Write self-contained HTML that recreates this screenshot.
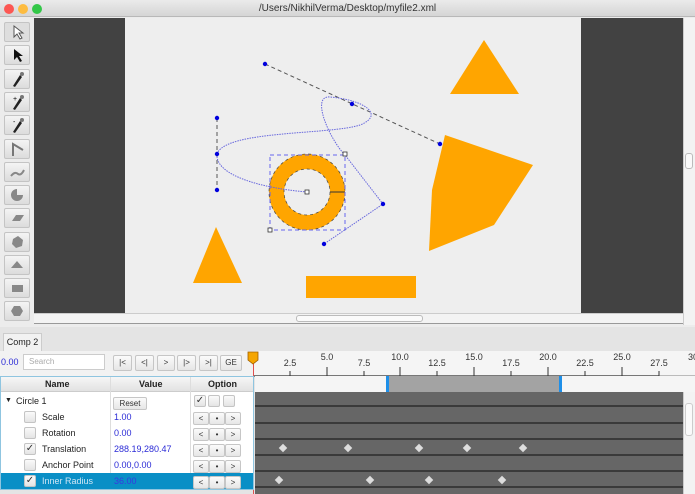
<!DOCTYPE html>
<html><head><meta charset="utf-8"><style>
*{margin:0;padding:0;box-sizing:border-box}
body{width:695px;height:494px;overflow:hidden;background:#ececec;font-family:"Liberation Sans",sans-serif;font-size:9px;color:#222;position:relative}
.abs{position:absolute}
.tb{left:0;top:0;width:695px;height:17px;background:linear-gradient(#ebebeb,#d5d5d5);border-bottom:1px solid #b8b8b8;text-align:center;font-size:10px;line-height:17px;color:#333}
.dot{width:10px;height:10px;border-radius:5px;top:4px}
.tool{left:4px;width:26px;height:20px;background:linear-gradient(#f4f4f4,#dcdcdc);border:1px solid #c4c4c4;border-radius:2px}
.btn{height:16px;background:linear-gradient(#fbfbfb,#e6e6e6);border:1px solid #c6c6c6;border-radius:2px;font-size:8px;text-align:center;line-height:14px;color:#333}
.row{left:0;width:253px;height:16px;font-size:9px;line-height:16px}
.cb{width:12px;height:12px;background:linear-gradient(#fafafa,#e4e4e4);border:1px solid #c4c4c4;border-radius:2px;font-size:10px;line-height:10px;text-align:center;color:#333}
.val{color:#2b2bd6}
.trk{left:255px;width:428px;height:15px;background:#666;border-bottom:2px solid #3a3a3a}
.dm{width:6px;height:6px;background:#ddd;transform:rotate(45deg)}
.tick{font-size:9px;color:#333}
</style></head><body>
<div class="abs tb">/Users/NikhilVerma/Desktop/myfile2.xml</div>
<div class="abs dot" style="left:4px;background:#fc5753"></div>
<div class="abs dot" style="left:18px;background:#fdbc40"></div>
<div class="abs dot" style="left:32px;background:#33c748"></div>

<!-- toolbar -->
<div class="abs" style="left:0;top:18px;width:34px;height:309px;background:#ececec"></div>
<div class="abs tool" style="top:22px;background:#dedede"><svg width="24" height="18"><path d="M9 3 L9 14 L12 11 L15 16 L17 15 L14 10 L18 10 Z" fill="#fff" stroke="#555" stroke-width="1"/></svg></div>
<div class="abs tool" style="top:45px"><svg width="24" height="18"><path d="M9 3 L9 14 L12 11 L15 16 L17 15 L14 10 L18 10 Z" fill="#111"/></svg></div>
<div class="abs tool" style="top:69px"><svg width="24" height="18"><path d="M8 16 L15 5 L17 7 L10 17 Z" fill="#222"/><circle cx="17" cy="4" r="2" fill="#777"/></svg></div>
<div class="abs tool" style="top:92px"><svg width="24" height="18"><path d="M8 16 L15 5 L17 7 L10 17 Z" fill="#222"/><circle cx="17" cy="4" r="2" fill="#777"/><text x="8" y="8" font-size="7">+</text></svg></div>
<div class="abs tool" style="top:115px"><svg width="24" height="18"><path d="M8 16 L15 5 L17 7 L10 17 Z" fill="#222"/><circle cx="17" cy="4" r="2" fill="#777"/><text x="8" y="8" font-size="7">-</text></svg></div>
<div class="abs tool" style="top:139px"><svg width="24" height="18"><path d="M8 16 L8 4 L18 10" fill="none" stroke="#777" stroke-width="2"/></svg></div>
<div class="abs tool" style="top:162px"><svg width="24" height="18"><path d="M6 13 Q10 8 13 11 Q16 13 19 7" fill="none" stroke="#888" stroke-width="2"/></svg></div>
<div class="abs tool" style="top:185px"><svg width="24" height="18"><path d="M12 9 L12 3 A6 6 0 1 0 18 9 Z" fill="#888"/></svg></div>
<div class="abs tool" style="top:208px"><svg width="24" height="18"><path d="M7 12 L11 6 L19 6 L15 12 Z" fill="#888"/></svg></div>
<div class="abs tool" style="top:232px"><svg width="24" height="18"><path d="M8 6 L13 3 L18 7 L17 13 L11 15 L7 11 Z" fill="#888"/></svg></div>
<div class="abs tool" style="top:255px"><svg width="24" height="18"><path d="M12 5 L18 12 L6 12 Z" fill="#888"/></svg></div>
<div class="abs tool" style="top:278px"><svg width="24" height="18"><rect x="7" y="6" width="11" height="7" fill="#888"/></svg></div>
<div class="abs tool" style="top:301px"><svg width="24" height="18"><path d="M9 4 L15 4 L18 9 L15 14 L9 14 L6 9 Z" fill="#888"/></svg></div>

<!-- canvas -->
<div class="abs" style="left:34px;top:18px;width:649px;height:295px;background:#424242"></div>
<div class="abs" style="left:125px;top:18px;width:456px;height:295px;background:#eeeeee"></div>
<div class="abs" style="left:683px;top:18px;width:12px;height:307px;background:#f3f3f3;border-left:1px solid #ccc"></div>
<div class="abs" style="left:685px;top:153px;width:8px;height:16px;background:#fafafa;border:1px solid #bbb;border-radius:3px"></div>
<div class="abs" style="left:34px;top:313px;width:649px;height:11px;background:#f3f3f3;border-top:1px solid #ccc;border-bottom:1px solid #999"></div>
<div class="abs" style="left:296px;top:315px;width:127px;height:7px;background:#fafafa;border:1px solid #bbb;border-radius:3px"></div>

<svg class="abs" style="left:0;top:0" width="695" height="330">
<polygon points="484,40 450,94 519,94" fill="#ffa500"/>
<polygon points="445,135 533,165 494,225 429,251 432,190" fill="#ffa500"/>
<polygon points="216,227 193,283 242,283" fill="#ffa500"/>
<rect x="306" y="276" width="110" height="22" fill="#ffa500"/>
<path d="M307 154 A38 38 0 1 1 306.9 154 Z M307 169 A23 23 0 1 0 307.1 169 Z" fill="#ffa500" fill-rule="evenodd"/>
<circle cx="307" cy="192" r="38" fill="none" stroke="#444" stroke-width=".7" stroke-dasharray="3,3"/>
<circle cx="307" cy="192" r="23" fill="none" stroke="#444" stroke-width=".7" stroke-dasharray="3,3"/>
<line x1="330" y1="192" x2="345" y2="192" stroke="#333" stroke-width="1"/>
<rect x="270" y="155" width="75" height="75" fill="none" stroke="#66e" stroke-width="1" stroke-dasharray="4,3"/>
<line x1="265" y1="64" x2="440" y2="144" stroke="#555" stroke-dasharray="4,3"/>
<line x1="217" y1="118" x2="217" y2="190" stroke="#555" stroke-dasharray="4,3"/>
<path d="M217 154 C225 130 330 135 360 125 C385 115 365 100 330 97 C310 95 330 140 345 155 L383 204 L324 244" fill="none" stroke="#6666dd" stroke-width="1" stroke-dasharray="1.5,1"/>
<path d="M217 154 C215 175 260 188 307 192" fill="none" stroke="#6666dd" stroke-width="1" stroke-dasharray="1.5,1"/>
<g fill="#0000dd"><circle cx="265" cy="64" r="2.2"/><circle cx="352" cy="104" r="2.2"/><circle cx="440" cy="144" r="2.2"/><circle cx="217" cy="118" r="2.2"/><circle cx="217" cy="154" r="2.2"/><circle cx="217" cy="190" r="2.2"/><circle cx="383" cy="204" r="2.2"/><circle cx="324" cy="244" r="2.2"/></g>
<g fill="#fff" stroke="#333" stroke-width=".8"><rect x="305" y="190" width="4" height="4"/><rect x="343" y="152" width="4" height="4"/><rect x="268" y="228" width="4" height="4"/></g>
</svg>

<!-- bottom panel -->
<div class="abs" style="left:0;top:327px;width:695px;height:167px;background:#e4e4e4"></div>
<div class="abs" style="left:3px;top:333px;width:39px;height:18px;background:#f2f2f2;border:1px solid #ccc;border-bottom:none;font-size:9px;line-height:17px;text-align:center">Comp 2</div>
<div class="abs" style="left:0;top:351px;width:695px;height:25px;background:#f2f2f2"></div>
<div class="abs val" style="left:1px;top:357px;font-size:9px">0.00</div>
<div class="abs" style="left:23px;top:354px;width:82px;height:16px;background:#fff;border:1px solid #ccc;color:#aaa;font-size:8px;line-height:14px;padding-left:5px">Search</div>
<div class="abs btn" style="left:113px;top:355px;width:19px">|&lt;</div>
<div class="abs btn" style="left:135px;top:355px;width:19px">&lt;|</div>
<div class="abs btn" style="left:157px;top:355px;width:18px">&gt;</div>
<div class="abs btn" style="left:177px;top:355px;width:19px">|&gt;</div>
<div class="abs btn" style="left:199px;top:355px;width:19px">&gt;|</div>
<div class="abs btn" style="left:220px;top:355px;width:22px">GE</div>

<!-- ruler -->
<div class="abs" style="left:253px;top:351px;width:442px;height:25px;background:#f5f5f5;border-bottom:1px solid #bbb"></div>
<svg class="abs" style="left:0;top:345px" width="695" height="40">
<g stroke="#333" stroke-width="1">
<line x1="290" y1="26" x2="290" y2="31"/><line x1="327" y1="22" x2="327" y2="31"/><line x1="364" y1="26" x2="364" y2="31"/><line x1="400" y1="22" x2="400" y2="31"/><line x1="437" y1="26" x2="437" y2="31"/><line x1="474" y1="22" x2="474" y2="31"/><line x1="511" y1="26" x2="511" y2="31"/><line x1="548" y1="22" x2="548" y2="31"/><line x1="585" y1="26" x2="585" y2="31"/><line x1="622" y1="22" x2="622" y2="31"/><line x1="659" y1="26" x2="659" y2="31"/><line x1="253" y1="31" x2="659" y2="31"/></g>
<g font-size="9" fill="#333" font-family="Liberation Sans" text-anchor="middle">
<text x="290" y="21">2.5</text><text x="327" y="15">5.0</text><text x="364" y="21">7.5</text><text x="400" y="15">10.0</text><text x="437" y="21">12.5</text><text x="474" y="15">15.0</text><text x="511" y="21">17.5</text><text x="548" y="15">20.0</text><text x="585" y="21">22.5</text><text x="622" y="15">25.0</text><text x="659" y="21">27.5</text><text x="693" y="15">30</text></g>
</svg>
<div class="abs" style="left:255px;top:376px;width:440px;height:16px;background:#f5f5f5"></div>
<div class="abs" style="left:388px;top:376px;width:172px;height:16px;background:#a3a3a3"></div>
<div class="abs" style="left:386px;top:376px;width:3px;height:16px;background:#1e8fe8"></div>
<div class="abs" style="left:559px;top:376px;width:3px;height:16px;background:#1e8fe8"></div>

<!-- tracks -->
<div class="abs" style="left:255px;top:392px;width:428px;height:102px;background:#666"></div>
<div class="abs trk" style="top:392px"></div>
<div class="abs trk" style="top:409px"></div>
<div class="abs trk" style="top:425px"></div>
<div class="abs trk" style="top:441px"></div>
<div class="abs trk" style="top:457px"></div>
<div class="abs trk" style="top:473px"></div>
<div class="abs" style="left:683px;top:392px;width:12px;height:102px;background:#f3f3f3;border-left:1px solid #ccc"></div>
<div class="abs" style="left:685px;top:403px;width:8px;height:33px;background:#fafafa;border:1px solid #ccc;border-radius:3px"></div>
<div class="abs dm" style="left:280px;top:445px"></div>
<div class="abs dm" style="left:345px;top:445px"></div>
<div class="abs dm" style="left:416px;top:445px"></div>
<div class="abs dm" style="left:464px;top:445px"></div>
<div class="abs dm" style="left:520px;top:445px"></div>
<div class="abs dm" style="left:276px;top:477px"></div>
<div class="abs dm" style="left:367px;top:477px"></div>
<div class="abs dm" style="left:426px;top:477px"></div>
<div class="abs dm" style="left:499px;top:477px"></div>

<!-- playhead -->
<div class="abs" style="left:253px;top:358px;width:1px;height:136px;background:#e05050"></div>
<svg class="abs" style="left:247px;top:351px" width="12" height="14"><path d="M1 1 L11 1 L11 9 L6 13 L1 9 Z" fill="#f5a500" stroke="#a06000" stroke-width=".8"/></svg>

<!-- table -->
<div class="abs" style="left:0;top:376px;width:254px;height:114px;background:#fff;border:1px solid #8fc5e0"></div>
<div class="abs" style="left:1px;top:377px;width:252px;height:15px;background:linear-gradient(#f6f6f6,#e2e2e2);border-bottom:1px solid #ccc;font-weight:bold;font-size:9px;line-height:15px">
<span class="abs" style="left:44px">Name</span><span class="abs" style="left:138px">Value</span><span class="abs" style="left:207px">Option</span></div>
<div class="abs" style="left:110px;top:377px;width:1px;height:112px;background:#ddd"></div>
<div class="abs" style="left:190px;top:377px;width:1px;height:112px;background:#ddd"></div>

<div class="abs row" style="top:393px"><span class="abs" style="left:5px;font-size:7px">▼</span><span class="abs" style="left:16px">Circle 1</span>
<span class="abs btn" style="left:113px;top:4px;width:34px;height:13px;line-height:11px;font-size:8px">Reset</span>
<span class="abs cb" style="left:194px;top:2px">✓</span><span class="abs cb" style="left:208px;top:2px"></span><span class="abs cb" style="left:223px;top:2px"></span></div>

<div class="abs row" style="top:409px"><span class="abs cb" style="left:24px;top:2px"></span><span class="abs" style="left:42px">Scale</span><span class="abs val" style="left:114px">1.00</span></div>
<div class="abs row" style="top:425px"><span class="abs cb" style="left:24px;top:2px"></span><span class="abs" style="left:42px">Rotation</span><span class="abs val" style="left:114px">0.00</span></div>
<div class="abs row" style="top:441px"><span class="abs cb" style="left:24px;top:2px">✓</span><span class="abs" style="left:42px">Translation</span><span class="abs val" style="left:114px">288.19,280.47</span></div>
<div class="abs row" style="top:457px"><span class="abs cb" style="left:24px;top:2px"></span><span class="abs" style="left:42px">Anchor Point</span><span class="abs val" style="left:114px">0.00,0.00</span></div>
<div class="abs row" style="top:473px;left:1px;width:252px;background:#0a8fc6;color:#cfe6f5"><span class="abs cb" style="left:23px;top:2px">✓</span><span class="abs" style="left:41px">Inner Radius</span><span class="abs" style="left:113px;color:#3838e0">36.00</span></div>

<div class="abs" style="left:193px;top:412px"><span class="abs btn" style="left:0;width:16px;height:13px;line-height:11px">&lt;</span><span class="abs btn" style="left:16px;width:16px;height:13px;line-height:11px">•</span><span class="abs btn" style="left:32px;width:16px;height:13px;line-height:11px">&gt;</span></div>
<div class="abs" style="left:193px;top:428px"><span class="abs btn" style="left:0;width:16px;height:13px;line-height:11px">&lt;</span><span class="abs btn" style="left:16px;width:16px;height:13px;line-height:11px">•</span><span class="abs btn" style="left:32px;width:16px;height:13px;line-height:11px">&gt;</span></div>
<div class="abs" style="left:193px;top:444px"><span class="abs btn" style="left:0;width:16px;height:13px;line-height:11px">&lt;</span><span class="abs btn" style="left:16px;width:16px;height:13px;line-height:11px">•</span><span class="abs btn" style="left:32px;width:16px;height:13px;line-height:11px">&gt;</span></div>
<div class="abs" style="left:193px;top:460px"><span class="abs btn" style="left:0;width:16px;height:13px;line-height:11px">&lt;</span><span class="abs btn" style="left:16px;width:16px;height:13px;line-height:11px">•</span><span class="abs btn" style="left:32px;width:16px;height:13px;line-height:11px">&gt;</span></div>
<div class="abs" style="left:193px;top:476px"><span class="abs btn" style="left:0;width:16px;height:13px;line-height:11px">&lt;</span><span class="abs btn" style="left:16px;width:16px;height:13px;line-height:11px">•</span><span class="abs btn" style="left:32px;width:16px;height:13px;line-height:11px">&gt;</span></div>
</body></html>
